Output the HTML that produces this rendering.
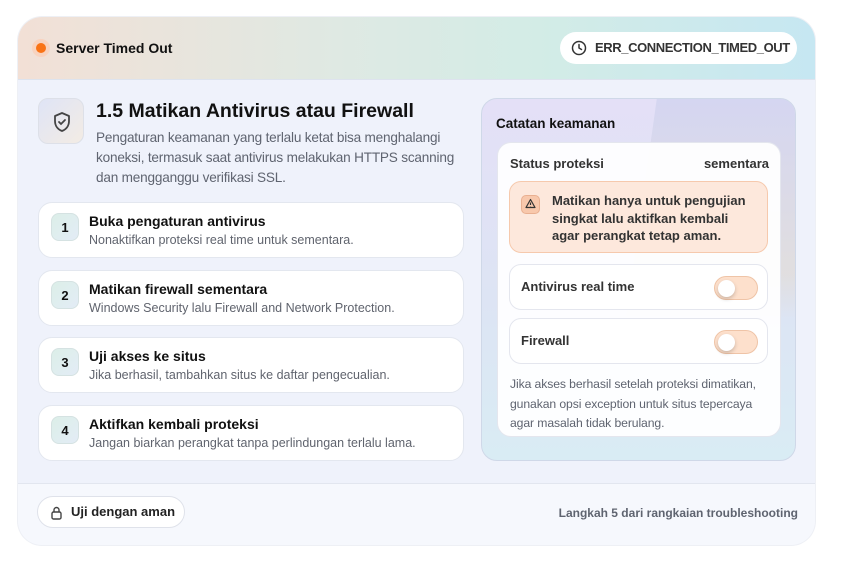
<!DOCTYPE html>
<html><head><meta charset="utf-8"><style>
*{box-sizing:border-box;margin:0;padding:0}
body{width:845px;height:575px;background:#fff;font-family:"Liberation Sans",sans-serif;position:relative;overflow:hidden;color:#111}
.card{position:absolute;left:18px;top:17px;width:797px;height:528px;border-radius:24px;overflow:hidden;background:#eff2fb;box-shadow:0 0 0 1px #eef0f5}
.hdr{position:absolute;left:0;top:0;width:797px;height:63px;background:linear-gradient(90deg,#f2e0d6 0%,#dfe9e3 40%,#d3ece6 65%,#c6e7f2 100%);border-bottom:1px solid #dde3ee}
.dot{position:absolute;left:14px;top:22px;width:18px;height:18px;border-radius:50%;background:#f8d3bf}
.dot:after{content:"";position:absolute;left:4px;top:4px;width:10px;height:10px;border-radius:50%;background:#f97316}
.ht{position:absolute;left:38px;top:23px;font-weight:bold;font-size:14px}
.pill{position:absolute;left:542px;top:15px;width:237px;height:32px;border-radius:16px;background:#fff;font-weight:bold;font-size:13px;letter-spacing:-0.4px;color:#333;line-height:32px;padding-left:35px}
.pill svg{position:absolute;left:11px;top:8px}
.ib{position:absolute;left:20px;top:81px;width:46px;height:46px;border-radius:10px;background:linear-gradient(135deg,#dfe4f6,#f3ece4);border:1px solid #dde0e8}
.ib svg{position:absolute;left:12px;top:12px}
.t1{position:absolute;left:78px;top:83px;font-size:19.5px;font-weight:bold}
.d1{position:absolute;left:78px;top:111px;width:380px;font-size:13.6px;letter-spacing:-0.2px;line-height:20px;color:#5f6470}
.st{position:absolute;left:20px;width:426px;height:56px;background:#fff;border:1px solid #e3e7ef;border-radius:14px}
.st .n{position:absolute;left:12px;top:10px;width:28px;height:28px;border-radius:8px;background:linear-gradient(135deg,#dcefe8,#e3ecf6);border:1px solid #d5e2e2;font-weight:bold;font-size:13px;text-align:center;line-height:27px}
.st .a{position:absolute;left:50px;top:10px;font-weight:bold;font-size:14px}
.st .b{position:absolute;left:50px;top:30px;font-size:12.5px;color:#60646e}
.rp{position:absolute;left:463px;top:81px;width:315px;height:363px;border-radius:16px;border:1px solid #cfd8e8;background:linear-gradient(180deg,#e4e0f7 0%,#dde4f4 55%,#d9ecf4 100%);overflow:hidden}
.rp:before{content:"";position:absolute;left:160px;top:-10px;width:200px;height:230px;background:linear-gradient(180deg,#cdd1f0 0%,#e2dcd6 80%,rgba(226,220,214,0) 100%);transform:skewX(-8deg);opacity:.7}
.rt{position:absolute;left:14px;top:17px;font-weight:bold;font-size:13.5px}
.in{position:absolute;left:15px;top:43px;width:284px;height:295px;border-radius:14px;background:rgba(255,255,255,.93);border:1px solid #e4e6ee}
.s1{position:absolute;left:12px;top:13px;font-weight:bold;font-size:13px;color:#333}
.s2{position:absolute;right:11px;top:13px;font-weight:bold;font-size:13px;color:#333}
.warn{position:absolute;left:11px;top:38px;width:259px;height:72px;border-radius:12px;background:#fde8dc;border:1px solid #f6c9ad}
.warn .ic{position:absolute;left:11px;top:13px;width:19px;height:19px;border-radius:5px;background:#f8c8ac;border:1px solid #e9b091}
.warn .tx{position:absolute;left:42px;top:10px;font-weight:bold;font-size:13px;line-height:17.5px;color:#333}
.tg{position:absolute;left:11px;width:259px;height:46px;border-radius:12px;background:#fff;border:1px solid #e4e6ee}
.tg span{position:absolute;left:11px;top:14px;font-weight:bold;font-size:13px;color:#333}
.sw{position:absolute;left:204px;top:11px;width:44px;height:24px;border-radius:12px;background:#fde0cc;border:1px solid #efc4a7}
.sw:after{content:"";position:absolute;left:3px;top:3px;width:17px;height:17px;border-radius:50%;background:#fff;box-shadow:0 2px 4px rgba(0,0,0,.2)}
.ft{position:absolute;left:12px;top:232px;font-size:12.2px;letter-spacing:-0.1px;line-height:19.5px;color:#5f6470}
.foot{position:absolute;left:0;top:466px;width:797px;height:62px;background:#f6f8fd;border-top:1px solid #e2e6ef}
.btn{position:absolute;left:19px;top:12px;width:148px;height:32px;border-radius:16px;background:#fff;border:1px solid #dfe2ea;font-weight:bold;font-size:13px;line-height:30px;padding-left:33px;color:#222}
.btn svg{position:absolute;left:12px;top:8px}
.fr{position:absolute;right:17px;top:22px;font-weight:bold;font-size:12px;color:#5f6470}
</style></head><body>
<div class="card">
 <div class="hdr">
  <div class="dot"></div><div class="ht">Server Timed Out</div>
  <div class="pill"><svg width="16" height="16" viewBox="0 0 16 16"><circle cx="8" cy="8" r="6.5" fill="none" stroke="#333" stroke-width="1.5"/><path d="M8 4.5V8l2.5 1.5" fill="none" stroke="#333" stroke-width="1.5" stroke-linecap="round"/></svg>ERR_CONNECTION_TIMED_OUT</div>
 </div>
 <div class="ib"><svg width="22" height="22" viewBox="0 0 22 22"><path d="M11 2l7 3v5c0 5-3 8.5-7 10-4-1.5-7-5-7-10V5z" fill="none" stroke="#444" stroke-width="1.8" stroke-linejoin="round"/><path d="M8 11l2 2 4-4" fill="none" stroke="#444" stroke-width="1.8" stroke-linecap="round"/></svg></div>
 <div class="t1">1.5 Matikan Antivirus atau Firewall</div>
 <div class="d1">Pengaturan keamanan yang terlalu ketat bisa menghalangi<br>koneksi, termasuk saat antivirus melakukan HTTPS scanning<br>dan mengganggu verifikasi SSL.</div>
 <div class="st" style="top:185px"><div class="n">1</div><div class="a">Buka pengaturan antivirus</div><div class="b">Nonaktifkan proteksi real time untuk sementara.</div></div>
 <div class="st" style="top:253px"><div class="n">2</div><div class="a">Matikan firewall sementara</div><div class="b">Windows Security lalu Firewall and Network Protection.</div></div>
 <div class="st" style="top:320px"><div class="n">3</div><div class="a">Uji akses ke situs</div><div class="b">Jika berhasil, tambahkan situs ke daftar pengecualian.</div></div>
 <div class="st" style="top:388px"><div class="n">4</div><div class="a">Aktifkan kembali proteksi</div><div class="b">Jangan biarkan perangkat tanpa perlindungan terlalu lama.</div></div>
 <div class="rp">
  <div class="rt">Catatan keamanan</div>
  <div class="in">
   <div class="s1">Status proteksi</div><div class="s2">sementara</div>
   <div class="warn"><div class="ic"><svg width="17" height="17" viewBox="0 0 17 17"><path d="M8.5 3.5l4.5 8h-9z" fill="none" stroke="#333" stroke-width="1.2" stroke-linejoin="round"/><path d="M8.5 6.5v2.5M8.5 10.2v.3" stroke="#333" stroke-width="1.2"/></svg></div><div class="tx">Matikan hanya untuk pengujian<br>singkat lalu aktifkan kembali<br>agar perangkat tetap aman.</div></div>
   <div class="tg" style="top:121px"><span>Antivirus real time</span><div class="sw"></div></div>
   <div class="tg" style="top:175px"><span>Firewall</span><div class="sw"></div></div>
   <div class="ft">Jika akses berhasil setelah proteksi dimatikan,<br>gunakan opsi exception untuk situs tepercaya<br>agar masalah tidak berulang.</div>
  </div>
 </div>
 <div class="foot">
  <div class="btn"><svg width="13" height="15" viewBox="0 0 13 15"><rect x="2" y="7" width="9" height="7" rx="1.5" fill="none" stroke="#444" stroke-width="1.4"/><path d="M4 7V5a2.5 2.5 0 015 0v2" fill="none" stroke="#444" stroke-width="1.4"/></svg>Uji dengan aman</div>
  <div class="fr">Langkah 5 dari rangkaian troubleshooting</div>
 </div>
</div>
</body></html>
